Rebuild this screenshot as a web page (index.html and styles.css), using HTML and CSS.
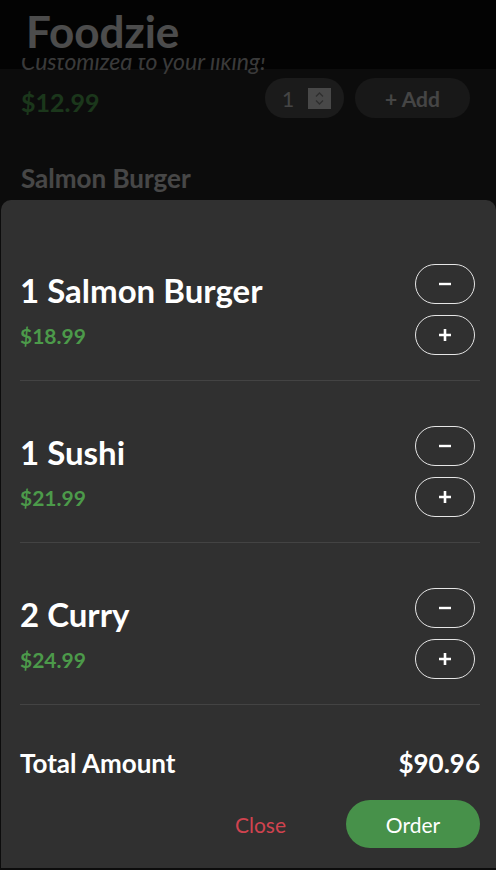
FILE: index.html
```html
<!DOCTYPE html>
<html lang="en">
<head>
<meta charset="utf-8">
<title>Foodzie</title>
<link rel="stylesheet" href="styles.css">
</head>
<body>
<header class="site-header">
  <h1 class="brand">Foodzie</h1>
</header>
<main class="menu">
  <article class="dish">
    <div class="dish-sub"><p>Customized to your liking!</p></div>
    <div class="dish-row">
      <span class="dish-price">$12.99</span>
      <div class="dish-form">
        <div class="qty">
          <span class="qty-val">1</span>
          <span class="qty-spin">
            <svg width="23" height="21" viewBox="0 0 23 21"><path d="M8 8.5 11.5 5 15 8.5M8 12.5 11.5 16 15 12.5" fill="none" stroke="#9a9a9a" stroke-width="1.4"/></svg>
          </span>
        </div>
        <button class="add-btn" type="button">+ Add</button>
      </div>
    </div>
  </article>
  <article class="dish">
    <h2 class="dish-name">Salmon Burger</h2>
  </article>
</main>

<div class="backdrop"></div>

<section class="cart" aria-label="Cart">
  <ul class="cart-list">
    <li class="cart-item">
      <div class="cart-info">
        <h3 class="cart-name">1 Salmon Burger</h3>
        <span class="cart-price">$18.99</span>
      </div>
      <div class="cart-steppers">
        <button class="step" type="button" aria-label="Remove one"><svg width="14" height="14" viewBox="0 0 14 14"><path d="M1 7H13" stroke="#fff" stroke-width="2.4"/></svg></button>
        <button class="step" type="button" aria-label="Add one"><svg width="14" height="14" viewBox="0 0 14 14"><path d="M1 7H13M7 1V13" stroke="#fff" stroke-width="2.6"/></svg></button>
      </div>
    </li>
    <li class="cart-item">
      <div class="cart-info">
        <h3 class="cart-name">1 Sushi</h3>
        <span class="cart-price">$21.99</span>
      </div>
      <div class="cart-steppers">
        <button class="step" type="button" aria-label="Remove one"><svg width="14" height="14" viewBox="0 0 14 14"><path d="M1 7H13" stroke="#fff" stroke-width="2.4"/></svg></button>
        <button class="step" type="button" aria-label="Add one"><svg width="14" height="14" viewBox="0 0 14 14"><path d="M1 7H13M7 1V13" stroke="#fff" stroke-width="2.6"/></svg></button>
      </div>
    </li>
    <li class="cart-item">
      <div class="cart-info">
        <h3 class="cart-name">2 Curry</h3>
        <span class="cart-price">$24.99</span>
      </div>
      <div class="cart-steppers">
        <button class="step" type="button" aria-label="Remove one"><svg width="14" height="14" viewBox="0 0 14 14"><path d="M1 7H13" stroke="#fff" stroke-width="2.4"/></svg></button>
        <button class="step" type="button" aria-label="Add one"><svg width="14" height="14" viewBox="0 0 14 14"><path d="M1 7H13M7 1V13" stroke="#fff" stroke-width="2.6"/></svg></button>
      </div>
    </li>
  </ul>
  <div class="cart-total">
    <span>Total Amount</span>
    <span>$90.96</span>
  </div>
  <div class="cart-actions">
    <button class="btn-close" type="button">Close</button>
    <button class="btn-order" type="button">Order</button>
  </div>
</section>
</body>
</html>
```

FILE: styles.css
```css
* { box-sizing: border-box; }

html, body {
  margin: 0;
  height: 100%;
}

body {
  background: #2b2b2b;
  font-family: Lato, "Noto Sans", sans-serif;
  color: #fff;
  overflow: hidden;
}

.site-header {
  height: 69px;
  background: #0a0a0a;
  padding: 9px 0 0 26px;
}

.brand {
  margin: 0;
  font-size: 44px;
  line-height: 44px;
  font-weight: 700;
  color: #fff;
}

.menu {
  padding: 0 26px 0 21px;
}

.dish-sub {
  margin-top: -11px;
  height: 18px;
  overflow: hidden;
  display: flex;
  align-items: flex-end;
}

.dish-sub p {
  margin: 0;
  padding-bottom: 3px;
  font-size: 23px;
  line-height: 24px;
  font-style: italic;
  color: #c3c3c3;
  white-space: nowrap;
}

.dish-row {
  display: flex;
  justify-content: space-between;
  margin-top: 2px;
  height: 40px;
}

.dish-price {
  align-self: flex-end;
  margin-bottom: 2px;
  font-size: 25px;
  line-height: 28px;
  font-weight: 700;
  color: #5cb85c;
}

.dish-form {
  display: flex;
  gap: 11px;
}

.qty {
  width: 79px;
  height: 40px;
  border-radius: 20px;
  background: #5a5a5a;
  display: flex;
  align-items: center;
  padding-left: 17px;
  gap: 14px;
}

.qty-val {
  font-size: 21px;
  color: #e6e6e6;
}

.qty-spin {
  width: 23px;
  height: 21px;
  background: #f0f0f0;
  display: block;
}

.qty-spin svg { display: block; }

.add-btn {
  width: 115px;
  height: 40px;
  border: 0;
  border-radius: 20px;
  background: #505050;
  color: #e6e6e6;
  font-family: inherit;
  font-size: 21px;
  font-weight: 700;
  padding: 0;
}

.dish-name {
  margin: 45px 0 0;
  font-size: 26px;
  line-height: 30px;
  font-weight: 700;
  color: #eee;
}

.backdrop {
  position: fixed;
  inset: 0;
  background: rgba(0, 0, 0, 0.7);
}

.cart {
  position: fixed;
  left: 1px;
  right: 0;
  bottom: 2px;
  background: #303030;
  border-radius: 10px 10px 0 0;
  padding: 19px 16px 20px 19px;
}

.cart-list {
  list-style: none;
  margin: 0;
  padding: 0;
}

.cart-item {
  display: flex;
  justify-content: space-between;
  align-items: center;
  padding: 45px 5px 25px 0;
  border-bottom: 1px solid #434343;
}

.cart-info {
  display: flex;
  flex-direction: column;
  gap: 13px;
}

.cart-name {
  margin: 0;
  font-size: 33px;
  line-height: 40px;
  font-weight: 700;
  color: #fff;
}

.cart-price {
  font-size: 21px;
  line-height: 26px;
  font-weight: 700;
  color: #4c9a4a;
}

.cart-steppers {
  display: flex;
  flex-direction: column;
  gap: 11px;
}

.step {
  width: 60px;
  height: 40px;
  padding: 0;
  border: 1px solid #e6e6e6;
  border-radius: 20px;
  background: transparent;
  display: grid;
  place-items: center;
  cursor: pointer;
}

.step svg { display: block; }

.cart-total {
  display: flex;
  justify-content: space-between;
  padding-top: 43px;
  font-size: 26px;
  line-height: 30px;
  font-weight: 700;
  color: #fff;
}

.cart-actions {
  display: flex;
  justify-content: flex-end;
  gap: 36px;
  margin-top: 22px;
}

.btn-close {
  height: 48px;
  padding: 0 24px;
  border: 0;
  background: none;
  color: #d0434f;
  font-family: inherit;
  font-size: 21px;
}

.btn-order {
  width: 134px;
  height: 48px;
  border: 0;
  border-radius: 24px;
  background: #47914a;
  color: #fff;
  font-family: inherit;
  font-size: 21px;
}
```
